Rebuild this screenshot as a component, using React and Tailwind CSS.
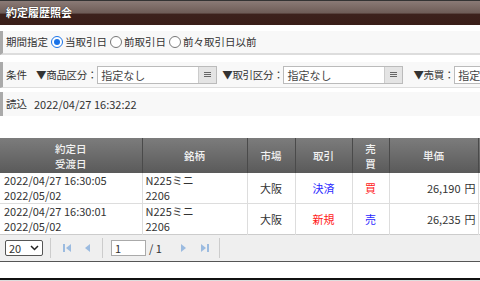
import React from "react";

const F = { fontFamily: '"Noto Sans CJK JP", "Liberation Sans", sans-serif' };

function SelectBox({ w }) {
  return (
    <div className={`flex h-[18px] border border-[#bbb] bg-white ${w}`}>
      <div className="flex-1 pl-[3px] text-[11px] leading-[16px] text-[#444]">指定なし</div>
      <div className="flex w-[18px] items-center justify-center border-l border-[#ccc] bg-[#e4e4e4]">
        <div className="flex flex-col gap-[1px]">
          <div className="h-[1px] w-[7px] bg-[#666]" />
          <div className="h-[1px] w-[7px] bg-[#666]" />
          <div className="h-[1px] w-[7px] bg-[#666]" />
        </div>
      </div>
    </div>
  );
}

function Radio({ on }) {
  return (
    <span className={`inline-flex h-[12px] w-[12px] items-center justify-center rounded-full border ${on ? "border-[#1a73e8]" : "border-[#777]"} bg-white`}>
      {on && <span className="h-[6px] w-[6px] rounded-full bg-[#1a73e8]" />}
    </span>
  );
}

export default function App() {
  return (
    <div style={F} className="relative h-[281px] w-[480px] overflow-hidden bg-white text-[11px] text-[#333]">
      {/* title */}
      <div className="h-[25px] border-t border-[#333] bg-[linear-gradient(#8a7a76_0%,#6e5c57_50%,#3c211c_55%,#3a1e19_100%)] pl-[6px] text-[11px] font-bold leading-[23px] text-white [text-shadow:0_0_1px_#000]">
        約定履歴照会
      </div>

      {/* period */}
      <div className="mt-[6px] flex h-[24px] items-center border-b-2 border-l-[3px] border-b-[#ddd] border-l-[#aaa] bg-[#f8f8f8] pl-[3px] text-[10.5px]">
        <span>期間指定</span>
        <span className="ml-[3px] flex items-center gap-[2px]"><Radio on />当取引日</span>
        <span className="ml-[3px] flex items-center gap-[2px]"><Radio />前取引日</span>
        <span className="ml-[3px] flex items-center gap-[2px]"><Radio />前々取引日以前</span>
      </div>

      {/* conditions */}
      <div className="mt-[7px] flex h-[26px] items-center whitespace-nowrap border-b border-l-[3px] border-b-[#ddd] border-l-[#aaa] bg-[#f8f8f8] pl-[3px] text-[10.5px]">
        <span>条件</span>
        <span className="ml-[9px] tracking-[-0.3px]">▼商品区分：</span>
        <SelectBox w="w-[120px] shrink-0" />
        <span className="ml-[5px] tracking-[-0.3px]">▼取引区分：</span>
        <SelectBox w="w-[120px] shrink-0" />
        <span className="ml-[10px] tracking-[-0.3px]">▼売買：</span>
        <SelectBox w="w-[120px] shrink-0" />
      </div>

      {/* read */}
      <div className="mt-[4px] flex h-[24px] items-center border-l-[3px] border-l-[#aaa] bg-[#f8f8f8] pl-[3px]">
        <span className="text-[10.5px]">読込</span>
        <span className="ml-[7px]">2022/04/27 16:32:22</span>
      </div>

      {/* table */}
      <div className="mt-[22px] w-[480px] border-b border-[#555]">
        <table className="w-[480px] table-fixed border-collapse">
          <colgroup>
            <col className="w-[142px]" />
            <col className="w-[105px]" />
            <col className="w-[48px]" />
            <col className="w-[57px]" />
            <col className="w-[37px]" />
            <col className="w-[89px]" />
            <col className="w-[2px]" />
          </colgroup>
          <thead>
            <tr className="h-[35px] bg-[linear-gradient(#7c7c7c,#5a5a5a)] text-[10.5px] leading-[15px] text-[#f2f2f2]">
              <th className="border-r border-[#4a4a4a] font-medium">約定日<br />受渡日</th>
              <th className="border-r border-[#4a4a4a] font-medium">銘柄</th>
              <th className="border-r border-[#4a4a4a] font-medium">市場</th>
              <th className="border-r border-[#4a4a4a] font-medium">取引</th>
              <th className="border-r border-[#4a4a4a] font-medium">売<br />買</th>
              <th className="border-r border-[#4a4a4a] font-medium">単価</th>
              <th className="font-normal"></th>
            </tr>
          </thead>
          <tbody className="leading-[15px]">
            <tr className="h-[29px] border-b border-[#ddd]">
              <td className="border-r border-[#ddd] pl-[4px]">2022/04/27 16:30:05<br />2022/05/02</td>
              <td className="border-r border-[#ddd] pl-[3px]">N225ミニ<br />2206</td>
              <td className="border-r border-[#ddd] text-center">大阪</td>
              <td className="border-r border-[#ddd] text-center text-[#2b2bff]">決済</td>
              <td className="border-r border-[#ddd] text-center text-[#ff1a1a]">買</td>
              <td className="border-r border-[#ddd] pr-[2px] text-right">26,190<span className="ml-[4px]">円</span></td>
              <td></td>
            </tr>
            <tr className="h-[29px] border-b border-[#ccc]">
              <td className="border-r border-[#ddd] pl-[4px]">2022/04/27 16:30:01<br />2022/05/02</td>
              <td className="border-r border-[#ddd] pl-[3px]">N225ミニ<br />2206</td>
              <td className="border-r border-[#ddd] text-center">大阪</td>
              <td className="border-r border-[#ddd] text-center text-[#ff1a1a]">新規</td>
              <td className="border-r border-[#ddd] text-center text-[#2b2bff]">売</td>
              <td className="border-r border-[#ddd] pr-[2px] text-right">26,235<span className="ml-[4px]">円</span></td>
              <td></td>
            </tr>
          </tbody>
        </table>
        {/* pager */}
        <div className="flex h-[26px] items-center bg-[#efefef] pl-[5px]">
          <div className="flex h-[16px] w-[38px] items-center justify-between rounded-[2px] border border-[#555] bg-white px-[3px] text-[11px]">
            <span>20</span>
            <svg width="9" height="6" viewBox="0 0 9 6"><path d="M1 1 L4.5 4.5 L8 1" fill="none" stroke="#222" strokeWidth="1.5" /></svg>
          </div>
          <div className="ml-[7px] h-[20px] w-[1px] bg-[#ccc]" />
          <svg className="ml-[11px]" width="10" height="10" viewBox="0 0 10 10"><rect x="1" y="1" width="2" height="8" fill="#9bbbe0" /><path d="M9 1 L4 5 L9 9 Z" fill="#9bbbe0" /></svg>
          <svg className="ml-[12px]" width="8" height="10" viewBox="0 0 8 10"><path d="M6 1 L1 5 L6 9 Z" fill="#9bbbe0" /></svg>
          <div className="ml-[10px] h-[20px] w-[1px] bg-[#ccc]" />
          <div className="ml-[8px] h-[16px] w-[35px] border border-[#aaa] bg-white pl-[3px] text-[11px] leading-[14px]">1</div>
          <span className="ml-[3px]">/ 1</span>
          <svg className="ml-[17px]" width="8" height="10" viewBox="0 0 8 10"><path d="M2 1 L7 5 L2 9 Z" fill="#9bbbe0" /></svg>
          <svg className="ml-[13px]" width="10" height="10" viewBox="0 0 10 10"><path d="M1 1 L6 5 L1 9 Z" fill="#9bbbe0" /><rect x="7" y="1" width="2" height="8" fill="#9bbbe0" /></svg>
          <div className="ml-[9px] h-[20px] w-[1px] bg-[#ccc]" />
        </div>
      </div>

      <div className="mt-[16px] h-[2px] w-[480px] bg-[#111]" />
      <div className="h-[10px] w-[480px] bg-[#ddd]" />
    </div>
  );
}
